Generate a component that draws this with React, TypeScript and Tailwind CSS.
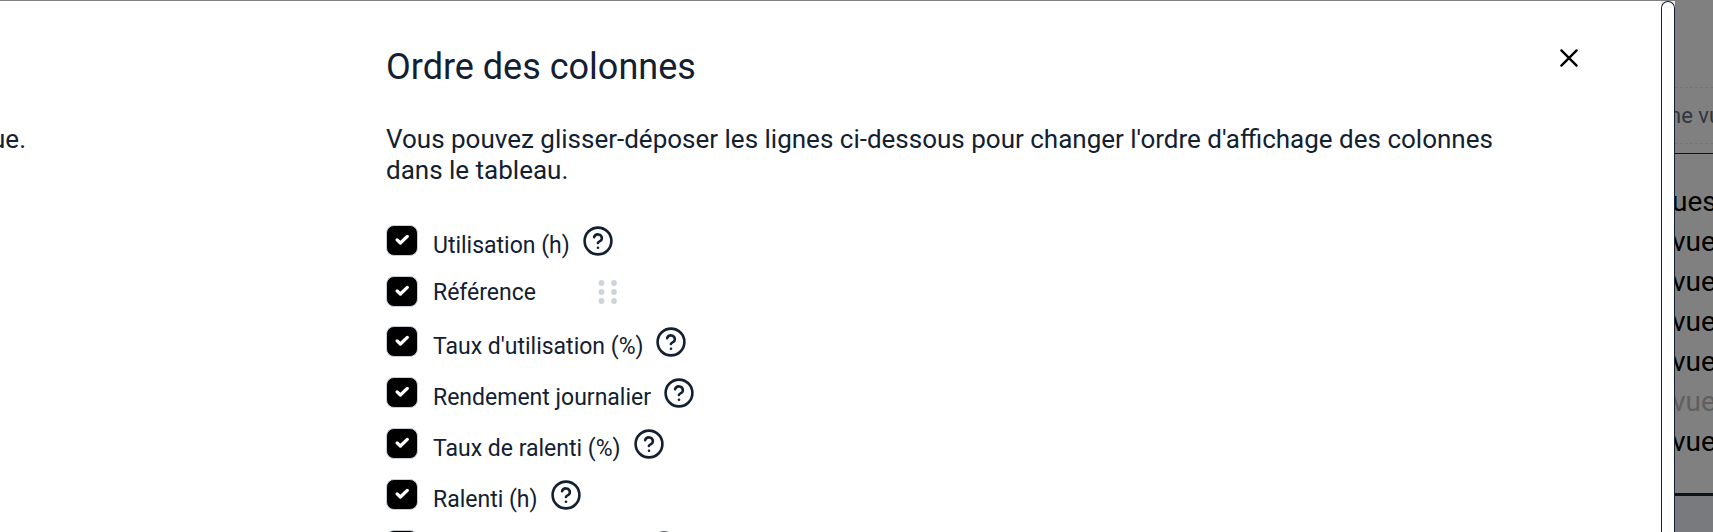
import { useState } from 'react';

interface Column {
  id: string;
  label: string;
  help: boolean;
}

const COLUMNS: Column[] = [
  { id: 'usage', label: 'Utilisation (h)', help: true },
  { id: 'reference', label: 'Référence', help: false },
  { id: 'usage-rate', label: "Taux d'utilisation (%)", help: true },
  { id: 'daily', label: 'Rendement journalier', help: true },
  { id: 'idle-rate', label: 'Taux de ralenti (%)', help: true },
  { id: 'idle', label: 'Ralenti (h)', help: true },
  { id: 'inactive-rate', label: "Taux d'inactivité (%)", help: true },
];

const VIEWS = [
  { text: 'ues', muted: false },
  { text: 'vue', muted: false },
  { text: 'vue', muted: false },
  { text: 'vue', muted: false },
  { text: 'vue', muted: false },
  { text: 'vue', muted: true },
  { text: 'vue', muted: false },
];

function HelpIcon() {
  return (
    <svg viewBox="0 0 32 32" className="size-8" fill="none" stroke="currentColor" strokeWidth="2.6" strokeLinecap="round" strokeLinejoin="round">
      <circle cx="16" cy="16" r="13.4" />
      <path d="M12.1 12.2a4 4 0 0 1 7.8 1.2c0 2.7-4 3.2-4 4.6" />
      <path d="M16 22.7h.01" />
    </svg>
  );
}

function DragHandle() {
  return (
    <svg viewBox="0 0 20 24" className="h-6 w-5" fill="#cdd5dc">
      {[3, 12, 21].map(y => (
        <g key={y}>
          <circle cx="3.5" cy={y} r="2.9" />
          <circle cx="16" cy={y} r="2.9" />
        </g>
      ))}
    </svg>
  );
}

function ColumnRow({ column }: { column: Column }) {
  const [checked, setChecked] = useState(true);

  return (
    <li className={column.help ? 'flex h-[51px] items-start' : 'flex h-[50px] items-start'}>
      <div className="relative mr-[15px] flex h-[31px] w-8">
        <input
          id={column.id}
          type="checkbox"
          checked={checked}
          onChange={e => setChecked(e.target.checked)}
          className="h-[31px] w-8 appearance-none rounded-lg border border-[#c5ced6] checked:bg-black"
        />
        {checked && (
          <svg viewBox="0 0 32 31" className="pointer-events-none absolute inset-0" fill="none" stroke="#fff" strokeWidth="3.3" strokeLinecap="round" strokeLinejoin="round">
            <path d="M11.1 14.9l3.3 3.1 6.9-6.6" />
          </svg>
        )}
      </div>
      <label htmlFor={column.id} className={column.help ? 'pt-[7px] text-[23px] leading-7' : 'pt-[3px] text-[23px] leading-7'}>
        {column.label}
      </label>
      {column.help ? (
        <button type="button" aria-label="Aide" className="ml-3">
          <HelpIcon />
        </button>
      ) : (
        <button type="button" aria-label="Déplacer" className="mt-1 ml-[62px]">
          <DragHandle />
        </button>
      )}
    </li>
  );
}

function Backdrop() {
  return (
    <aside className="flex min-w-0 flex-1 flex-col overflow-hidden bg-[#808080] text-black">
      <div className="mt-[87px] flex h-[57px] items-center border-y border-dashed border-[#757575] text-[22px] text-[#30363e]">
        <span className="-ml-1.5 whitespace-nowrap">ne vue</span>
      </div>
      <ul className="mt-[9px] h-[343px] border-t border-b-[3px] border-[#0b131d] pt-7 text-[28px] leading-10">
        {VIEWS.map((view, i) => (
          <li key={i} className={view.muted ? '-ml-[3px] text-[#5f5f5f]' : '-ml-[3px]'}>
            {view.text}
          </li>
        ))}
      </ul>
      <div className="flex-1 bg-[#787a7d]" />
    </aside>
  );
}

export default function App() {
  return (
    <div className="flex h-screen overflow-hidden bg-[#808080] font-['Roboto',sans-serif] text-[#122031]">
      <main className="mt-px flex w-[1661px] shrink bg-white">
        <section className="flex w-[386px] shrink-0 pt-[123px]">
          <p className="flex w-[26px] justify-end overflow-hidden text-[26px] leading-[31px]">ue.</p>
        </section>
        <section className="flex-1 pt-11">
          <header className="flex items-start justify-between pr-20">
            <h1 className="text-[36px] leading-[44px]">Ordre des colonnes</h1>
            <button type="button" aria-label="Fermer" className="mt-px text-black">
              <svg viewBox="0 0 24 24" className="size-6" fill="none" stroke="currentColor" strokeWidth="2.4" strokeLinecap="round">
                <path d="M4.4 4.4l15.2 15.2M19.6 4.4L4.4 19.6" />
              </svg>
            </button>
          </header>
          <p className="mt-[35px] mr-40 text-[26px] leading-[31px]">
            Vous pouvez glisser-déposer les lignes ci-dessous pour changer l'ordre d'affichage des colonnes dans le tableau.
          </p>
          <ul className="mt-[39px]">
            {COLUMNS.map(column => (
              <ColumnRow key={column.id} column={column} />
            ))}
          </ul>
        </section>
      </main>
      <div className="mt-px w-3.5 shrink-0 bg-[#e6e8ea]">
        <div className="h-full rounded-t-full border border-b-0 border-[#122031] bg-white" />
      </div>
      <Backdrop />
    </div>
  );
}
